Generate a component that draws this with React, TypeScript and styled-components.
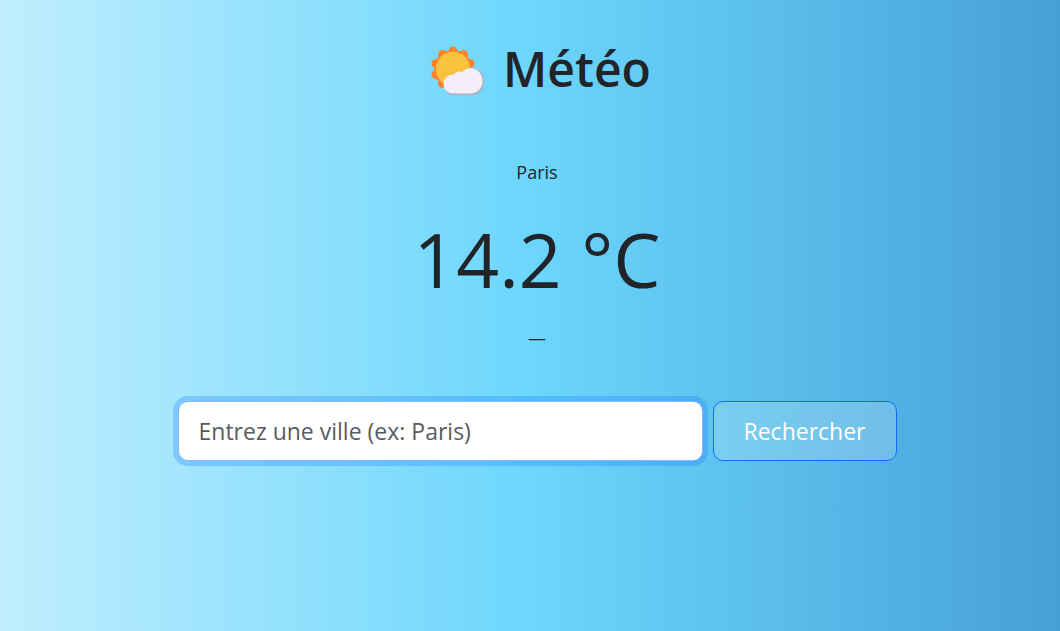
import React from "react";
import styled, { createGlobalStyle } from "styled-components";

const GlobalStyle = createGlobalStyle`
  *, *::before, *::after { box-sizing: border-box; }
  body {
    margin: 0;
    min-height: 100vh;
    color: #212529;
    font-family: "Segoe UI", "Open Sans", "Noto Sans", sans-serif;
    background: linear-gradient(to right, #c0eefe 0%, #6cd6fc 50%, #45a0d8 100%);
  }
`;

const Page = styled.main`
  display: flex;
  flex-direction: column;
  align-items: center;
  padding: 38px 0 38px 14px;
`;

const Title = styled.h1`
  display: flex;
  align-items: flex-end;
  gap: 18px;
  margin: 0;
  padding-left: 6px;
  font-size: 48px;
  font-weight: 600;
  line-height: 62px;
`;

const SunCloud = styled.svg`
  width: 56px;
  height: 55px;
`;

const Weather = styled.section`
  display: flex;
  flex-direction: column;
  align-items: center;
  margin-top: 56px;
`;

const Line = styled.p`
  margin: 0;
  font-size: 18px;
  line-height: 32px;
`;

const Temperature = styled.p`
  margin: 28px 0 20px;
  font-size: 75px;
  line-height: 86px;
`;

const SearchForm = styled.form`
  display: flex;
  gap: 10px;
  width: 100%;
  max-width: 719px;
  margin-top: 47px;
`;

const CityInput = styled.input`
  flex: 1;
  min-width: 0;
  height: 60px;
  padding: 0 20px;
  border: 1px solid #86b7fe;
  border-radius: 10px;
  outline: 0;
  color: #212529;
  background: #fff;
  font: inherit;
  font-size: 23px;
  box-shadow: 0 0 0 5px rgba(13, 110, 253, 0.25);
  &::placeholder { color: #595c5f; opacity: 1; }
`;

const SearchButton = styled.button`
  height: 60px;
  width: 184px;
  padding: 0;
  border: 1px solid #0d6efd;
  border-radius: 10px;
  color: #fff;
  background: rgba(255, 255, 255, 0.18);
  font: inherit;
  font-size: 23px;
  cursor: pointer;
`;

const petals = Array.from({ length: 10 }, (_, i) => {
  const angle = (i * Math.PI) / 5;
  return { x: 24 + 18 * Math.sin(angle), y: 24 - 18 * Math.cos(angle) };
});

export default function App() {
  return (
    <>
      <GlobalStyle />
      <Page>
        <Title>
          <SunCloud viewBox="0 0 56 55" aria-hidden="true">
            <g fill="#ff822d">
              <circle cx="24" cy="24" r="19" />
              {petals.map((p, i) => (
                <circle key={i} cx={p.x} cy={p.y} r="4.400" />
              ))}
            </g>
            <circle cx="24" cy="24" r="17.2" fill="#f8c23c" />
            <path
              fill="#b4acbc"
              d="M24 50a9 9 0 0 1-7-4L40 22.500c8 0 15 5.500 15 13.800S49.500 50 41.500 50Z"
            />
            <path
              fill="#f3eef8"
              d="M23.500 48.500a9 9 0 0 1-9-9c0-6 4.500-10.500 10.500-10 1.500-3 5.500-3.700 8-2.300 2.500-2.700 5-4 8.500-4 7 0 12 5.700 12 12.700s-5 12.600-12 12.600Z"
            />
          </SunCloud>
          Météo
        </Title>
        <Weather>
          <Line>Paris</Line>
          <Temperature>14.2 °C</Temperature>
          <Line>—</Line>
        </Weather>
        <SearchForm onSubmit={(e: React.FormEvent) => e.preventDefault()}>
          <CityInput
            type="text"
            aria-label="Ville"
            placeholder="Entrez une ville (ex: Paris)"
          />
          <SearchButton type="submit">Rechercher</SearchButton>
        </SearchForm>
      </Page>
    </>
  );
}
